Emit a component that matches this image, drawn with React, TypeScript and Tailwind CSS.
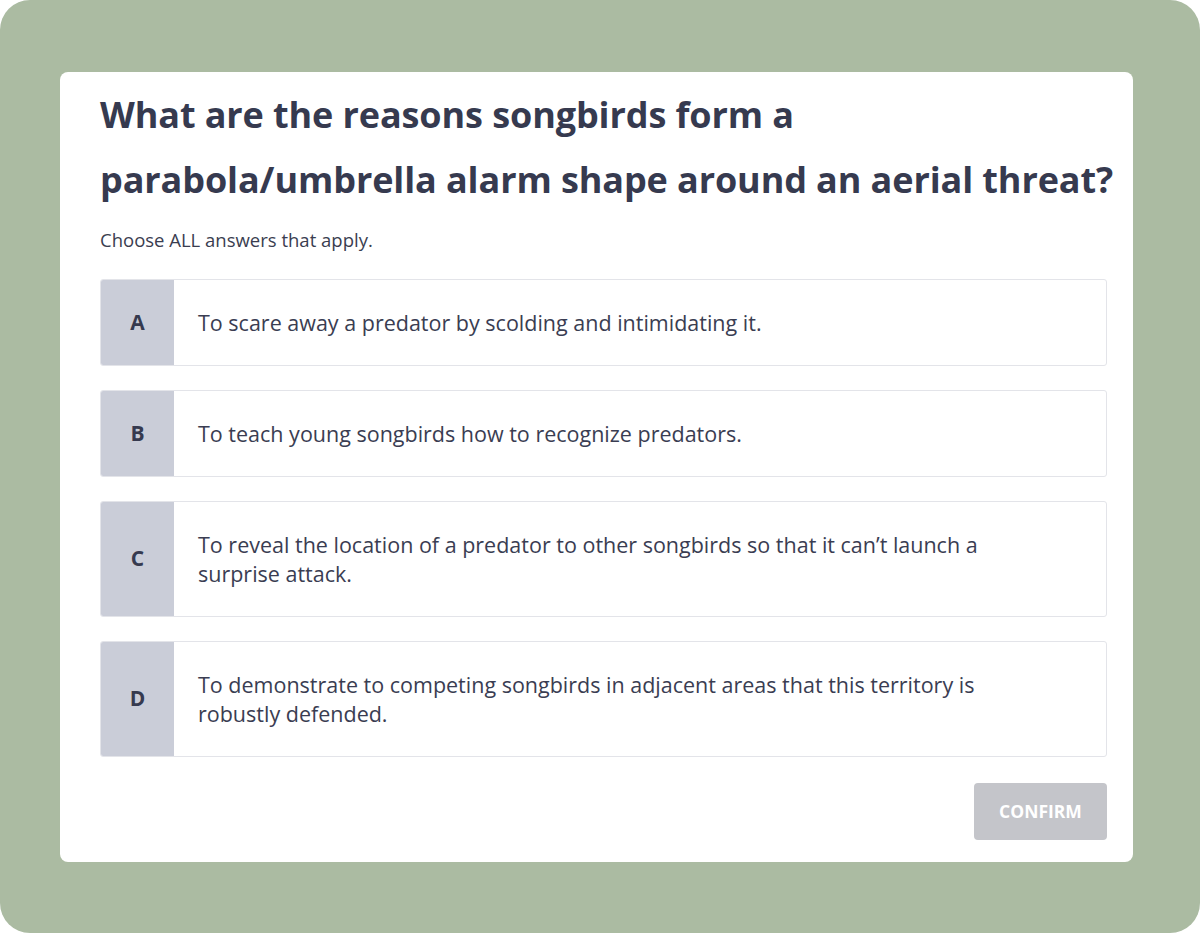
import React from "react";

const options = [
  { letter: "A", text: "To scare away a predator by scolding and intimidating it." },
  { letter: "B", text: "To teach young songbirds how to recognize predators." },
  {
    letter: "C",
    text: "To reveal the location of a predator to other songbirds so that it can\u2019t launch a surprise attack.",
  },
  {
    letter: "D",
    text: "To demonstrate to competing songbirds in adjacent areas that this territory is robustly defended.",
  },
];

export default function App() {
  return (
    <div className="w-[1200px] h-[935px] bg-white" style={{ fontFamily: "'Open Sans', Lato, sans-serif" }}>
      <div className="h-[933px] bg-[#abbba2] rounded-[30px] pt-[72px] pl-[60px] pr-[67px]">
        <div className="bg-white rounded-[8px] pt-[10px] pb-[22px] pl-[40px] pr-[26px]">
          <h1 className="text-[36px] leading-[65px] font-bold text-[#363a4f] tracking-[-0.1px] whitespace-nowrap">
            What are the reasons songbirds form a
            <br />
            parabola/umbrella alarm shape around an aerial threat?
          </h1>
          <p className="mt-[16px] text-[18.5px] leading-[24px] text-[#3a3d50]">Choose ALL answers that apply.</p>
          <div className="mt-[27px] flex flex-col gap-[24px]">
            {options.map((o) => (
              <div key={o.letter} className="flex border border-[#e3e4e9] rounded-[3px] overflow-hidden bg-white">
                <div className="w-[73px] shrink-0 bg-[#cacdd8] flex items-center justify-center text-[21px] font-bold text-[#363a4f]">
                  {o.letter}
                </div>
                <div className="flex-1 py-[28px] pl-[24px] text-[21.5px] leading-[29px] text-[#3a3d52]">
                  <div className="max-w-[800px]">{o.text}</div>
                </div>
              </div>
            ))}
          </div>
          <div className="mt-[26px] flex justify-end">
            <button className="w-[133px] h-[57px] rounded-[4px] bg-[#c4c5ca] text-white font-bold text-[17.5px]">
              CONFIRM
            </button>
          </div>
        </div>
      </div>
    </div>
  );
}
